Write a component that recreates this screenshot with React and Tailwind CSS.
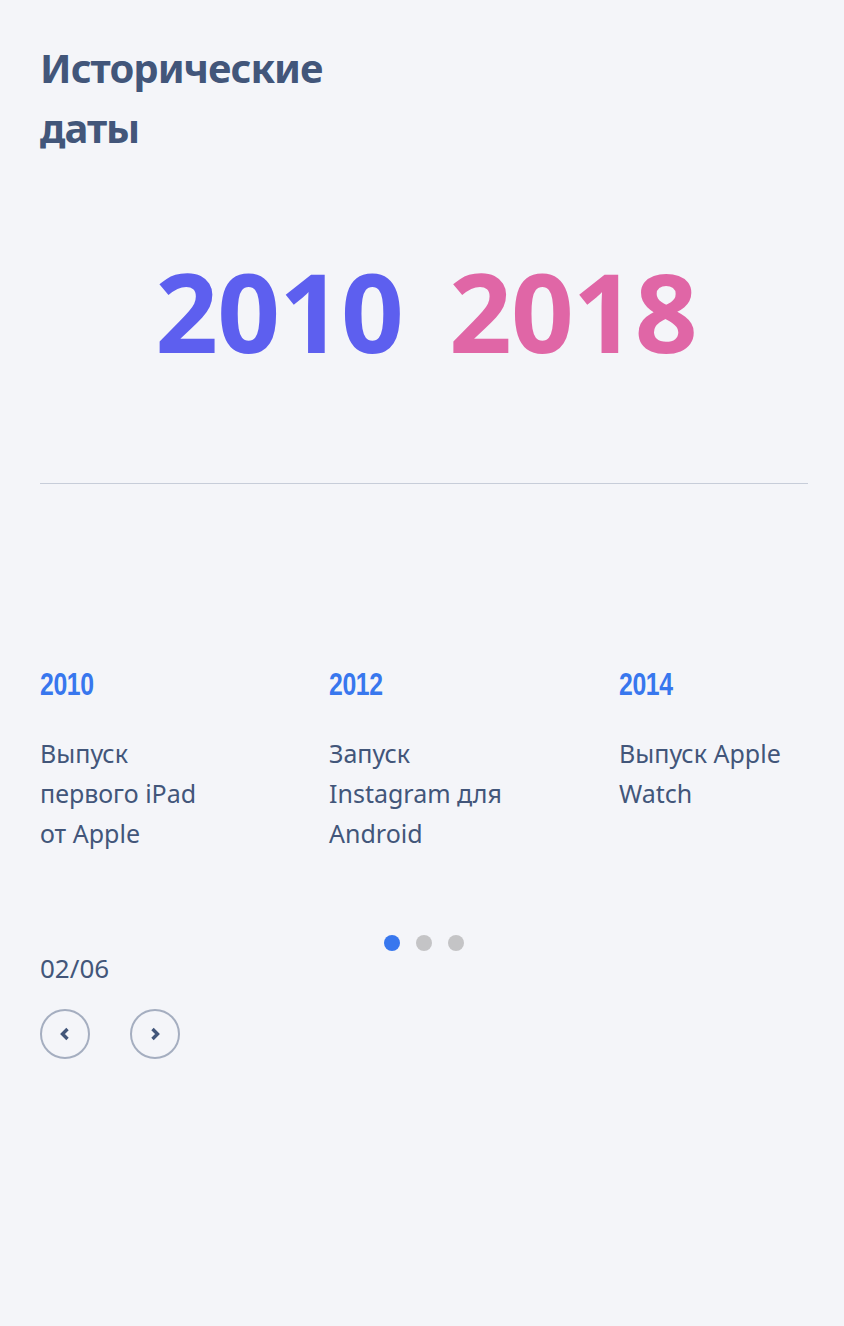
const events = [
  { year: '2010', text: 'Выпуск первого iPad от Apple' },
  { year: '2012', text: 'Запуск Instagram для Android' },
  { year: '2014', text: 'Выпуск Apple Watch' },
];

function Chevron({ dir }) {
  return (
    <svg width="14" height="16" viewBox="0 0 14 16" fill="none">
      <path
        d={dir === 'left' ? 'M9.5 3L4.5 8L9.5 13' : 'M4.5 3L9.5 8L4.5 13'}
        stroke="#42567a"
        strokeWidth="3.4"
      />
    </svg>
  );
}

export default function App() {
  return (
    <div className="min-h-[1326px] w-full bg-[#f4f5f9] font-['Noto_Sans',sans-serif] text-[#42567a]">
      <div className="px-10 pt-[38px] pr-[36px]">
        <h1 className="w-[300px] text-[40px] font-bold leading-[60px] tracking-[-1px]">
          Исторические даты
        </h1>

        <div className="mt-[97px] flex justify-center gap-[46px] pl-[4px] text-[110px] font-bold leading-none tracking-[-1px]">
          <span className="text-[#5d5fef]">2010</span>
          <span className="text-[#e066a6]">2018</span>
        </div>

        <div className="mt-[118px] h-px bg-[#c7cdd9]" />

        <div className="mt-[186px] grid grid-cols-[289px_290px_1fr]">
          {events.map((e) => (
            <div key={e.year}>
              <div className="origin-left scale-x-[0.8] font-['Liberation_Sans',sans-serif] text-[31px] font-bold leading-[30px] tracking-[-0.5px] text-[#3877ee]">
                {e.year}
              </div>
              <p className="mt-[33px] w-[180px] text-[25px] leading-[40px]">{e.text}</p>
            </div>
          ))}
        </div>

        <div className="mt-[82px] flex justify-center gap-4">
          <span className="h-4 w-4 rounded-full bg-[#3877ee]" />
          <span className="h-4 w-4 rounded-full bg-[#c4c4c6]" />
          <span className="h-4 w-4 rounded-full bg-[#c4c4c6]" />
        </div>

        <div className="mt-[2px] text-[26px] leading-[30px]">02/06</div>

        <div className="mt-[26px] flex gap-10">
          <button className="flex h-[50px] w-[50px] items-center justify-center rounded-full border-2 border-[#a5aec0]">
            <Chevron dir="left" />
          </button>
          <button className="flex h-[50px] w-[50px] items-center justify-center rounded-full border-2 border-[#a5aec0]">
            <Chevron dir="right" />
          </button>
        </div>
      </div>
    </div>
  );
}
